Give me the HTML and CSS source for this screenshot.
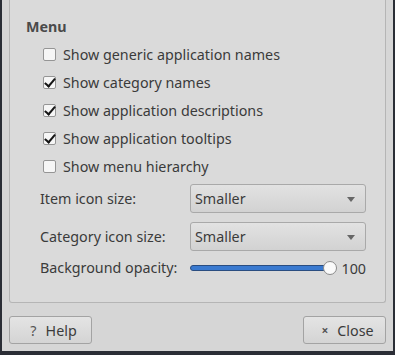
FILE: index.html
```html
<!DOCTYPE html>
<html lang="en">
<head>
    <meta charset="UTF-8">
    <title>Menu Settings</title>
    <link rel="stylesheet" href="styles.css">
</head>
<body>
    <div class="window">
        <div class="panel">
            <div class="section-title">Menu</div>

            <div class="check-list">
                <label class="check-row"><span class="box"></span>Show generic application names</label>
                <label class="check-row"><span class="box checked"></span>Show category names</label>
                <label class="check-row"><span class="box checked"></span>Show application descriptions</label>
                <label class="check-row"><span class="box checked"></span>Show application tooltips</label>
                <label class="check-row"><span class="box"></span>Show menu hierarchy</label>
            </div>

            <div class="form-grid">
                <div class="form-label">Item icon size:</div>
                <div class="combo">Smaller<span class="arrow"></span></div>

                <div class="form-label">Category icon size:</div>
                <div class="combo">Smaller<span class="arrow"></span></div>

                <div class="form-label slider-label">Background opacity:</div>
                <div class="slider-row">
                    <div class="groove"><span class="knob"></span></div>
                    <span class="slider-value">100</span>
                </div>
            </div>
        </div>

        <div class="button-bar">
            <button class="btn"><span class="btn-icon">?</span>Help</button>
            <button class="btn"><span class="btn-icon close-icon">×</span>Close</button>
        </div>
    </div>
</body>
</html>
```

FILE: styles.css
```css
body {
    margin: 0;
    background: #2b2e36;
    font-family: "Noto Sans", "Open Sans", sans-serif;
    font-size: 14.3px;
    color: #3b3b3b;
}

.window {
    margin-left: 2px;
    width: 391px;
    height: 351px;
    background: #d6d6d6;
    padding: 0 7px;
    box-sizing: border-box;
}

.panel {
    background: #dadada;
    border: 1px solid #b5b5b5;
    border-top: none;
    border-radius: 0 0 3px 3px;
    padding: 17px 0 22px 16px;
    width: 377px;
    box-sizing: border-box;
}

.section-title {
    font-weight: bold;
    line-height: 20px;
    height: 20px;
    color: #4a4a4a;
}

.check-list {
    display: flex;
    flex-direction: column;
    margin-top: 3px;
    padding-left: 17px;
}

.check-row {
    display: flex;
    align-items: center;
    height: 28px;
    gap: 7px;
}

.box {
    width: 11px;
    height: 11px;
    border: 1px solid #959595;
    border-radius: 2px;
    background: #f6f6f6;
    position: relative;
}

.box.checked::after {
    content: "";
    position: absolute;
    left: 3px;
    top: -1px;
    width: 4px;
    height: 9px;
    border: solid #151515;
    border-width: 0 2px 2px 0;
    transform: rotate(40deg);
}

.form-grid {
    display: grid;
    grid-template-columns: 150px 176px;
    row-gap: 9px;
    margin-top: 4px;
    padding-left: 14px;
    align-items: center;
}

.form-label {
    line-height: 20px;
}

.combo {
    height: 29px;
    box-sizing: border-box;
    border: 1px solid #a9a9a9;
    border-radius: 3px;
    background: linear-gradient(#e2e2e2, #d2d2d2);
    display: flex;
    align-items: center;
    justify-content: space-between;
    padding: 0 10px 0 4px;
}

.arrow {
    width: 0;
    height: 0;
    border-left: 4px solid transparent;
    border-right: 4px solid transparent;
    border-top: 5px solid #666;
    margin-top: 2px;
}

.slider-label {
    margin-top: -4px;
}

.slider-row {
    display: flex;
    align-items: center;
    height: 24px;
    margin-top: -4px;
}

.groove {
    width: 143px;
    height: 4px;
    background: #3a7ad0;
    border: 1px solid #2a4d80;
    border-radius: 3px;
    position: relative;
}

.knob {
    position: absolute;
    right: -7px;
    top: -5px;
    width: 12px;
    height: 12px;
    border-radius: 50%;
    background: #fafafa;
    border: 1px solid #8a8a8a;
}

.slider-value {
    margin-left: 10px;
}

.button-bar {
    display: flex;
    justify-content: space-between;
    margin-top: 13px;
}

.btn {
    width: 83px;
    height: 28px;
    border: 1px solid #a3a3a3;
    border-radius: 3px;
    background: linear-gradient(#e4e4e4, #d4d4d4);
    font-family: "Noto Sans", "Open Sans", sans-serif;
    font-size: 14.3px;
    color: #3b3b3b;
    display: flex;
    align-items: center;
    justify-content: center;
    gap: 9px;
    padding: 0 0 0 6px;
}

.btn-icon {
    color: #555;
}

.close-icon {
    font-weight: bold;
    font-size: 12px;
}
```
